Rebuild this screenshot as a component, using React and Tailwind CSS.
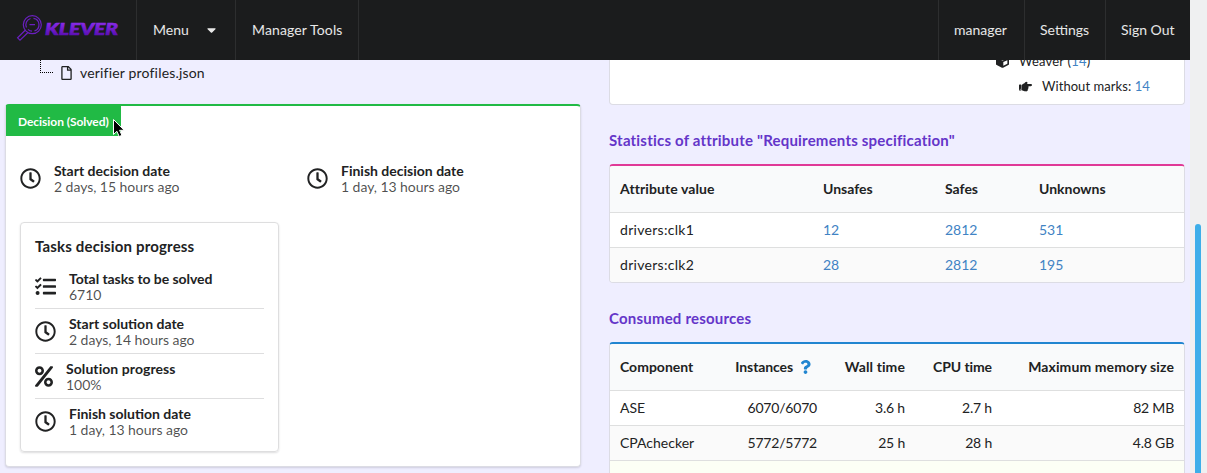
import React from 'react';
import {
  FaCaretDown,
  FaCube,
  FaHandPointRight,
  FaPercent,
  FaQuestion,
  FaRegClock,
  FaRegFile,
  FaTasks,
} from 'react-icons/fa';

function Logo() {
  return (
    <svg className="ml-4 h-[30px] w-[110px]" viewBox="0 0 110 30">
      <defs>
        <linearGradient id="klever" x1="0" y1="0" x2="0" y2="1">
          <stop offset="0.2" stopColor="#8a2cec" />
          <stop offset="0.8" stopColor="#5c10b4" />
        </linearGradient>
      </defs>
      <g fill="none" stroke="#6a1fc0" strokeWidth="1.2">
        <circle cx="16.300" cy="9.700" r="9" />
        <path d="M10.500 12.500a6.500 6.500 0 0 1 4-9M17.500 3.300a6.500 6.500 0 0 1 1 12.600M16 16.200a6.500 6.500 0 0 1-4-1.800" />
        <path d="M13.500 9.700h5.500M9.200 15.300L1.600 22.800l2.400 2.400L12 17.500" />
      </g>
      <text
        x="29"
        y="20"
        textLength="73"
        lengthAdjust="spacingAndGlyphs"
        fill="url(#klever)"
        stroke="url(#klever)"
        strokeWidth="0.7"
        className="font-['Lato',sans-serif] text-[17.500px] font-black italic"
      >
        KLEVER
      </text>
    </svg>
  );
}

function Item({ icon: Icon, iconClass = 'w-[21px]', title, children, className = '' }) {
  return (
    <div className={`flex items-center ${className}`}>
      <Icon className={`h-[21px] shrink-0 ${iconClass}`} />
      <div className="pt-[2px] pl-[13px] leading-4">
        <div className="font-bold text-[#212223]">{title}</div>
        <div className="tracking-[-0.05px] text-black/70">{children}</div>
      </div>
    </div>
  );
}

function Title({ children }) {
  return <h4 className="text-[15px] leading-[19px] font-bold tracking-[0.2px] text-[#6435c9]">{children}</h4>;
}

const link = 'text-[#4183c4]';
const attributes = [
  ['drivers:clk1', '12', '2812', '531'],
  ['drivers:clk2', '28', '2812', '195'],
];
const resources = [
  ['ASE', '6070/6070', '3.6 h', '2.7 h', '82 MB'],
  ['CPAchecker', '5772/5772', '25 h', '28 h', '4.8 GB'],
];

function AttributeTable() {
  const cols = 'grid grid-cols-[203px_122px_94px_1fr] items-center px-2.5';
  return (
    <div className="mt-[14px] h-[119px] overflow-hidden rounded border border-t-2 border-[#dcdce4] border-t-[#e03997] bg-white">
      <div className={`${cols} h-[47px] border-b border-[#dedfdf] bg-[#f9fafb] font-bold`}>
        <span className="tracking-[0.1px]">Attribute value</span>
        <span>Unsafes</span>
        <span>Safes</span>
        <span>Unknowns</span>
      </div>
      {attributes.map(([name, ...values]) => (
        <div key={name} className={`${cols} h-[35px] border-b border-[#dedfdf] last:h-[34px] last:border-b-0 even:bg-white odd:bg-[#fafafa]`}>
          <span className="tracking-[0.3px]">{name}</span>
          {values.map((v, i) => <span key={i} className={link}>{v}</span>)}
        </div>
      ))}
    </div>
  );
}

function ResourceTable() {
  const cols = 'grid grid-cols-[1fr_97px_88px_87px_182px] items-center px-2.5 text-right';
  return (
    <div className="mt-[14px] h-[180px] overflow-hidden rounded border border-t-2 border-[#dcdce4] border-t-[#2185d0] bg-white">
      <div className={`${cols} h-[47px] border-b border-[#dedfdf] bg-[#f9fafb] font-bold`}>
        <span className="text-left">Component</span>
        <span className="flex items-center justify-end tracking-[-0.1px]">
          Instances
          <FaQuestion className="mr-[6px] ml-[7px] h-[14px] w-[11px] text-[#2185d0]" />
        </span>
        <span className="tracking-[0.1px]">Wall time</span>
        <span className="tracking-[-0.1px]">CPU time</span>
        <span className="tracking-[0.1px]">Maximum memory size</span>
      </div>
      {resources.map(([name, ...values]) => (
        <div key={name} className={`${cols} h-[35px] border-b border-[#dedfdf] even:bg-white odd:bg-[#fafafa]`}>
          <span className="text-left">{name}</span>
          {values.map((v, i) => <span key={i} className="tracking-[-0.2px]">{v}</span>)}
        </div>
      ))}
      <div className="h-[35px] bg-[#fcfff5]" />
    </div>
  );
}

export default function App() {
  return (
    <div className="relative flex h-[473px] w-[1207px] overflow-hidden bg-[#efeeff] font-['Lato',sans-serif] text-[14px] leading-5 text-[#212223]">
      <div className="flex w-[1190px] flex-col">
        <header className="flex h-[60px] shrink-0 bg-[#1b1c1d] text-white/90">
          <div className="flex w-[137px] items-center border-r border-[#2d2e2f] pb-[1px]"><Logo /></div>
          <div className="flex w-[99px] items-center border-r border-[#2d2e2f] pl-4">
            Menu
            <FaCaretDown className="ml-[18px] h-[14px] w-[9px]" />
          </div>
          <div className="flex w-[123px] items-center border-r border-[#2d2e2f] pl-4 tracking-[0.13px]">Manager Tools</div>
          <div className="ml-auto flex">
            <div className="flex w-[86px] items-center border-l border-[#2d2e2f] pl-[15px]">manager</div>
            <div className="flex w-[81px] items-center border-l border-[#2d2e2f] pl-[15px]">Settings</div>
            <div className="flex w-[85px] items-center border-l border-[#2d2e2f] pl-[15px]">Sign Out</div>
          </div>
        </header>

        <main className="flex min-h-0 grow gap-7 overflow-hidden pr-[5px] pl-[5px]">
          <section className="flex w-[576px] flex-col">
            <div className="flex h-[44px] items-start pl-[35px]">
              <div className="h-[13px] w-[13px] border-b border-l border-dotted border-black" />
              <FaRegFile className="mt-[6px] ml-[8px] h-[14px] w-[11px]" />
              <span className="mt-[3px] ml-[8px] tracking-[0.18px]">verifier profiles.json</span>
            </div>
            <div className="h-[363px] shrink-0 rounded border border-t-2 border-[#dcdce4] border-t-[#21ba45] bg-white shadow-[0_1px_2px_0_rgba(34,36,38,0.15)]">
              <div className="h-[30px] w-[115px] bg-[#21ba45] pl-3 text-[12px] leading-[31px] font-bold tracking-[-0.05px] text-white">Decision (Solved)</div>
              <div className="mt-[25px] flex pl-[14px]">
                <Item icon={FaRegClock} title="Start decision date" className="w-[287px]">2 days, 15 hours ago</Item>
                <Item icon={FaRegClock} title="Finish decision date">1 day, 13 hours ago</Item>
              </div>
              <div className="mt-[27px] ml-[14px] h-[230px] w-[259px] rounded border border-[#dededf] px-[14px] pt-[14px] shadow-[0_1px_2px_0_rgba(34,36,38,0.15)]">
                <h4 className="text-[15px] leading-[19px] font-bold tracking-[0.17px]">Tasks decision progress</h4>
                <div className="mt-[8px] divide-y divide-[#dededf]">
                  <Item icon={FaTasks} title="Total tasks to be solved" className="h-[45px] tracking-[-0.07px]">6710</Item>
                  <Item icon={FaRegClock} title="Start solution date" className="h-[45px]">2 days, 14 hours ago</Item>
                  <Item icon={FaPercent} iconClass="w-[18px]" title="Solution progress" className="h-[45px] tracking-[0.07px]">100%</Item>
                  <Item icon={FaRegClock} title="Finish solution date" className="h-[44px]">1 day, 13 hours ago</Item>
                </div>
              </div>
            </div>
          </section>

          <section className="w-[576px]">
            <div className="h-[45px] overflow-hidden rounded-b border border-t-0 border-[#dcdce4] bg-white text-[13px]">
              <div className="-mt-[9px] flex h-5 items-center pl-[386px]">
                <FaCube className="mr-[10px] h-[13px] w-[13px]" />
                <span className="tracking-[0.2px]">Weaver (<span className={link}>14</span>)</span>
              </div>
              <div className="mt-[5px] flex h-5 items-center pl-[409px]">
                <FaHandPointRight className="mr-[10px] h-[13px] w-[13px]" />
                <span className="tracking-[0.06px]">Without marks: <span className={link}>14</span></span>
              </div>
            </div>
            <div className="mt-[26px]"><Title>Statistics of attribute "Requirements specification"</Title></div>
            <AttributeTable />
            <div className="mt-[26px]"><Title>Consumed resources</Title></div>
            <ResourceTable />
          </section>
        </main>
      </div>

      <div className="flex w-[17px] justify-center bg-[#eff0f1] pt-[224px] pr-[1px]">
        <div className="h-[300px] w-[6px] rounded-t-[3px] bg-[#3daee9]" />
      </div>

      <svg className="absolute top-[118px] left-[112px] h-[20px] w-[14px]" viewBox="0 0 14 20">
        <path d="M1.500 1.500v15l3.400-3.200 2.300 5.200 2.700-1.200-2.300-5h4.600z" fill="#000" stroke="#fff" strokeWidth="1" />
      </svg>
    </div>
  );
}
